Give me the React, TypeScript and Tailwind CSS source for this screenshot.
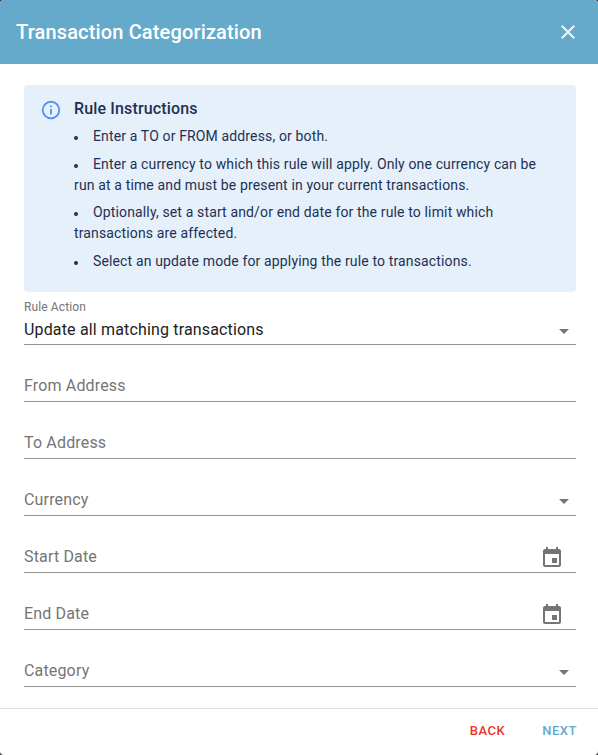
import type { ReactNode } from "react";

const font = { fontFamily: "Roboto, sans-serif" };

function DropIcon() {
  return (
    <svg viewBox="0 0 24 24" className="h-6 w-6 fill-[#757575]">
      <path d="M7 10l5 5 5-5z" />
    </svg>
  );
}

function EventIcon() {
  return (
    <svg viewBox="0 0 24 24" className="mr-3 h-6 w-6 fill-[#757575]">
      <path d="M17 12h-5v5h5v-5zM16 1v2H8V1H6v2H5c-1.11 0-1.99.9-1.99 2L3 19c0 1.1.89 2 2 2h14c1.1 0 2-.9 2-2V5c0-1.1-.9-2-2-2h-1V1h-2zm3 18H5V8h14v11z" />
    </svg>
  );
}

function Field({ label, icon }: { label: string; icon?: ReactNode }) {
  return (
    <div className="flex h-[57px] items-end">
      <div className="flex h-[30px] w-full items-center justify-between border-b border-[#949494]">
        <span className="pb-px text-base tracking-[0.01em] text-[#757575]">{label}</span>
        {icon}
      </div>
    </div>
  );
}

const rules = [
  "Enter a TO or FROM address, or both.",
  "Enter a currency to which this rule will apply. Only one currency can be run at a time and must be present in your current transactions.",
  "Optionally, set a start and/or end date for the rule to limit which transactions are affected.",
  "Select an update mode for applying the rule to transactions.",
];

export default function App() {
  return (
    <div className="h-[755px] w-[598px] overflow-hidden bg-[#3a3a3a]" style={font}>
      <div className="flex h-full flex-col overflow-hidden rounded bg-white">
        <header className="flex h-[64px] shrink-0 items-center justify-between bg-[#66aacb] pl-4 pr-[18px]">
          <h1 className="text-xl font-medium tracking-[0.0075em] text-white">
            Transaction Categorization
          </h1>
          <svg viewBox="0 0 24 24" className="h-6 w-6 fill-white opacity-90">
            <path d="M19 6.41L17.59 5 12 10.59 6.41 5 5 6.41 10.59 12 5 17.59 6.41 19 12 13.41 17.59 19 19 17.59 13.41 12z" />
          </svg>
        </header>

        <main className="flex-1 pl-6 pr-[22px] pt-[21px]">
          <div className="flex h-[207px] rounded bg-[#e5f0fb] pl-4 pr-4 pt-[14px] text-[#1e3054]">
            <svg viewBox="0 0 24 24" className="mr-3 h-[22px] w-[22px] shrink-0 fill-[#4f8ff7]">
              <path d="M11,9H13V7H11V9M12,20C7.59,20 4,16.41 4,12C4,7.59 7.59,4 12,4C16.41,4 20,7.59 20,12C20,16.41 16.41,20 12,20M12,2A10,10 0 0,0 2,12A10,10 0 0,0 12,22A10,10 0 0,0 22,12A10,10 0 0,0 12,2M11,17H13V11H11V17Z" />
            </svg>
            <div className="min-w-0 flex-1">
              <h2 className="text-base font-medium leading-[20px] tracking-[0.009em]">Rule Instructions</h2>
              <ul className="mt-[7px] flex list-inside list-disc flex-col gap-[6.5px] text-sm leading-[21px] tracking-[0.01em]">
                {rules.map((rule) => (
                  <li key={rule} className="[&::marker]:text-xs">
                    <span className="ml-[2px]">{rule}</span>
                  </li>
                ))}
              </ul>
            </div>
          </div>

          <div className="mt-[9px] flex h-[44px] flex-col justify-between border-b border-[#949494]">
            <span className="text-xs leading-3 tracking-[0.01em] text-[#757575]">Rule Action</span>
            <div className="flex h-[26px] items-center justify-between">
              <span className="mb-[2px] text-base leading-6 tracking-[0.01em] text-[#212121]">
                Update all matching transactions
              </span>
              <DropIcon />
            </div>
          </div>

          <Field label="From Address" />
          <Field label="To Address" />
          <Field label="Currency" icon={<DropIcon />} />
          <Field label="Start Date" icon={<EventIcon />} />
          <Field label="End Date" icon={<EventIcon />} />
          <Field label="Category" icon={<DropIcon />} />
        </main>

        <footer className="flex h-[47px] shrink-0 items-center justify-end gap-[37px] border-t border-[#e0e0e0] pb-[2px] pr-[21px] text-[13px] font-medium tracking-[0.04em]">
          <button className="text-[#e8352a]">BACK</button>
          <button className="text-[#66aacb]">NEXT</button>
        </footer>
      </div>
    </div>
  );
}
